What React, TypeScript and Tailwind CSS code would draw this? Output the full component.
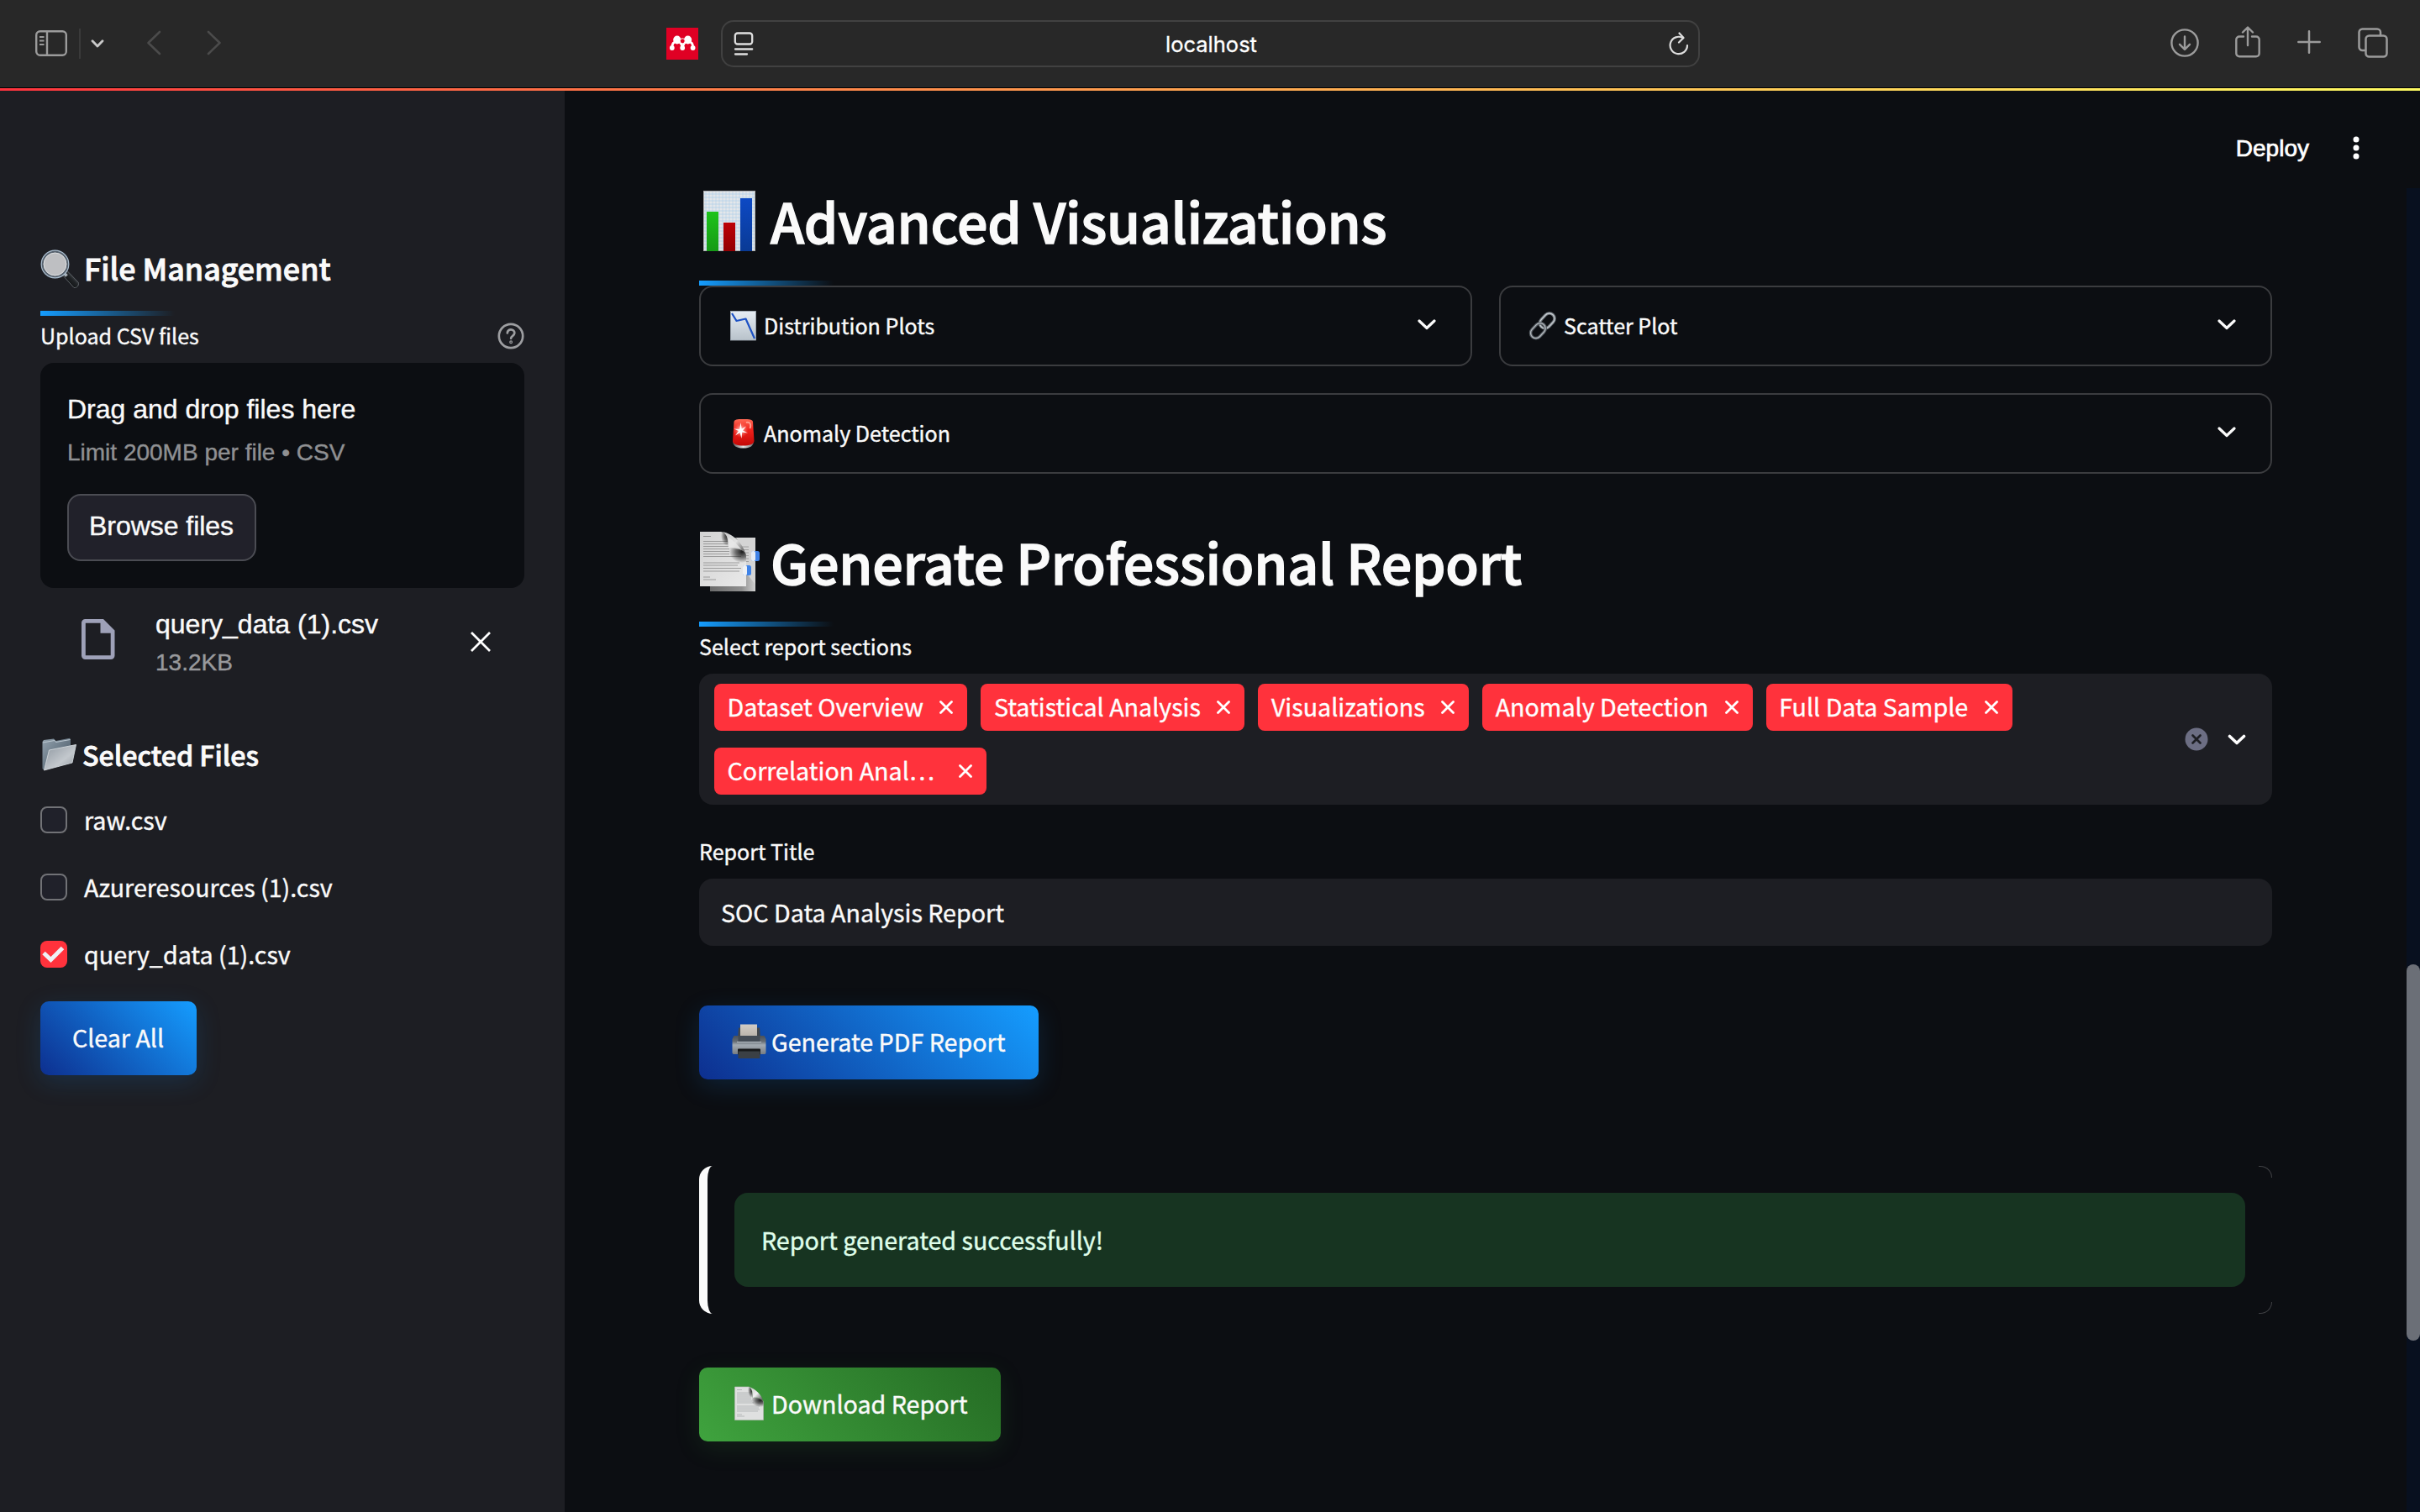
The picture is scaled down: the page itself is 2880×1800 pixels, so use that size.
import type { ReactNode } from 'react';

/* ---------- emoji-style pictures ---------- */

function BarChartEmoji() {
  const lines = Array.from({ length: 17 }, (_, i) => 4 + i * 4);
  return (
    <svg viewBox="0 0 72 72" className="mt-px h-[72px] w-[72px] shrink-0">
      <defs>
        <linearGradient id="bc-g" x1="0" y1="0" x2="0" y2="1"><stop offset="0" stopColor="#1dc31b" /><stop offset="1" stopColor="#169a17" /></linearGradient>
        <linearGradient id="bc-r" x1="0" y1="0" x2="0" y2="1"><stop offset="0" stopColor="#bd0106" /><stop offset="1" stopColor="#920004" /></linearGradient>
        <linearGradient id="bc-b" x1="0" y1="0" x2="0" y2="1"><stop offset="0" stopColor="#0d49c4" /><stop offset="1" stopColor="#093a95" /></linearGradient>
      </defs>
      <rect x="5.5" y=".5" width="61" height="71" fill="#e4e7ea" stroke="#a9acae" />
      {lines.map((y) => <path key={y} d={`M6 ${y}H66`} stroke="#a9cdea" strokeWidth=".9" opacity=".75" />)}
      {lines.slice(0, 15).map((x) => <path key={x} d={`M${x + 4} 1V71`} stroke="#a9cdea" strokeWidth=".8" opacity=".65" />)}
      <rect x="9" y="25" width="14" height="47" fill="url(#bc-g)" />
      <rect x="29" y="38" width="14" height="34" fill="url(#bc-r)" />
      <rect x="49" y="9" width="14" height="63" fill="url(#bc-b)" />
    </svg>
  );
}

function BookmarkTabsEmoji() {
  const rows = [12.5, 15.5, 18.5, 21.5, 24.5, 27.5, 30.5, 38, 41, 44.5, 48];
  return (
    <svg viewBox="0 0 72 72" className="h-[72px] w-[72px] shrink-0">
      <defs>
        <linearGradient id="bt-p" x1="0" y1="0" x2="1" y2="1"><stop offset="0" stopColor="#d2d2d2" /><stop offset="1" stopColor="#e9e9e9" /></linearGradient>
        <linearGradient id="bt-c" x1="0" y1="0" x2="1" y2="1"><stop offset="0" stopColor="#c4c4c4" /><stop offset=".5" stopColor="#e2e2e2" /><stop offset=".75" stopColor="#8a8a8a" /><stop offset="1" stopColor="#3c3c3c" /></linearGradient>
        <radialGradient id="bt-s"><stop offset="0" stopColor="#111" stopOpacity=".95" /><stop offset=".5" stopColor="#222" stopOpacity=".6" /><stop offset="1" stopColor="#222" stopOpacity="0" /></radialGradient>
        <linearGradient id="bt-b" x1="0" y1="0" x2="1" y2="0"><stop offset="0" stopColor="#6b6b6b" /><stop offset=".7" stopColor="#8f8f8f" /><stop offset="1" stopColor="#cfcfcf" /></linearGradient>
        <clipPath id="bt-clip"><path d="M1 1H26C33 2 35 9 36 21C46 21 56 22 56 30V66H1Z" /></clipPath>
      </defs>
      <rect x="13" y="8" width="54" height="64" fill="url(#bt-b)" />
      <path d="M44 8H67V64L56 50V30Z" fill="#d4d4d4" />
      {[19, 22.5, 26, 29.5, 33, 36.5].map((y) => <path key={y} d={`M49 ${y}H59`} stroke="#9a9a9a" strokeWidth=".9" />)}
      <path d="M1 1H26C33 2 35 9 36 21C46 21 56 22 56 30V66H1Z" fill="url(#bt-p)" />
      <path d="M5 6.5H14" stroke="#8f8f8f" strokeWidth="1" />
      {rows.map((y, i) => <path key={y} d={`M5 ${y}H${i < 2 ? 34 : i < 6 ? 36 : 50 - (i % 3) * 2}`} stroke="#9b9b9b" strokeWidth="1" />)}
      <path d="M5 55H13M5 58H20" stroke="#9b9b9b" strokeWidth="1" />
      <g clipPath="url(#bt-clip)">
        <ellipse cx="34" cy="6" rx="8" ry="12" fill="url(#bt-s)" />
        <ellipse cx="51" cy="25" rx="15" ry="13" fill="url(#bt-s)" />
      </g>
      <path d="M27 1C35 4 34 12 35 21C45 20 56 22 56 30C54 18 42 3 27 1Z" fill="url(#bt-c)" />
      <path d="M35 8V20.500C40 20 46 20.500 50 22C47 17 40 11 35 8Z" fill="#e9e9e9" opacity=".8" />
      <rect x="62" y="24" width="10" height="12" rx="2.5" fill="#3f83e8" /><rect x="62" y="24" width="5" height="12" rx="2" fill="#e6edf5" />
      <rect x="52" y="41" width="10" height="12" rx="2.5" fill="#3f83e8" /><rect x="52" y="41" width="5" height="12" rx="2" fill="#eef1f5" />
    </svg>
  );
}

function MagnifierEmoji() {
  return (
    <svg viewBox="0 0 46 46" className="mt-1 h-[46px] w-[46px] shrink-0">
      <defs><linearGradient id="mg-h" x1="1" y1="0" x2="0" y2="1"><stop offset="0" stopColor="#8b9299" /><stop offset=".45" stopColor="#202326" /><stop offset="1" stopColor="#000" /></linearGradient></defs>
      <path d="M26 30L32 25.500L45.500 39.500C46 43 43.500 46 40 45.500Z" fill="url(#mg-h)" stroke="#5d6267" strokeWidth="1" />
      <path d="M27 27L31.500 31.500" stroke="#aab3bb" strokeWidth="3.800" />
      <circle cx="17.500" cy="17.500" r="15.200" fill="#bebfc2" stroke="#56616d" strokeWidth="3" />
      <circle cx="17.500" cy="17.500" r="16.300" fill="none" stroke="#a9bccd" strokeWidth="1.200" />
      <circle cx="17.500" cy="17.500" r="13.400" fill="none" stroke="#dcdee0" strokeWidth="1" />
    </svg>
  );
}

function FolderEmoji() {
  return (
    <svg viewBox="0 0 44 40" className="h-[40px] w-[44px] shrink-0">
      <defs>
        <linearGradient id="fo-b" x1="0" y1="0" x2="1" y2="1"><stop offset="0" stopColor="#93a2ae" /><stop offset="1" stopColor="#3f4f5d" /></linearGradient>
        <linearGradient id="fo-f" x1="0" y1="0" x2="1" y2="1"><stop offset="0" stopColor="#8d969f" /><stop offset=".6" stopColor="#c3c8cd" /><stop offset="1" stopColor="#8f979f" /></linearGradient>
      </defs>
      <path d="M2.500 5L4 3L16 1.500L18.500 4L35 .800L36 2.500V30L4 38.500L2.500 37Z" fill="url(#fo-b)" />
      <path d="M3 6L17 3.500L18.500 5.500L35.500 2.500" fill="none" stroke="#bcc8d1" strokeWidth="1" />
      <path d="M10.500 15L42.500 8.500L38 30L4.500 39Z" fill="url(#fo-f)" stroke="#d3d8dc" strokeWidth=".9" strokeLinejoin="round" />
    </svg>
  );
}

function ChartDownEmoji() {
  return (
    <svg viewBox="0 0 36 36" className="h-9 w-9 shrink-0">
      <defs><linearGradient id="cd" x1="0" y1="0" x2="0" y2="1"><stop offset="0" stopColor="#e6edf4" /><stop offset="1" stopColor="#b8c2ca" /></linearGradient></defs>
      <rect x="3.500" y=".5" width="30" height="34.500" fill="url(#cd)" stroke="#a5afb8" strokeWidth=".8" />
      <path d="M5 3L10.500 12L21.500 9.500L32 33" fill="none" stroke="#1c51c4" strokeWidth="2.200" strokeLinejoin="round" />
    </svg>
  );
}

function LinkEmoji() {
  return (
    <svg viewBox="0 0 36 36" className="h-9 w-9 shrink-0">
      <g fill="none" transform="rotate(-47 18 18)">
        <rect x="16" y="11.500" width="20" height="12.500" rx="6.250" stroke="#70767c" strokeWidth="3.600" />
        <rect x="16" y="11.500" width="20" height="12.500" rx="6.250" stroke="#c6ccd1" strokeWidth="1.300" />
        <rect x="0" y="11.500" width="20" height="12.500" rx="6.250" stroke="#565c62" strokeWidth="3.600" />
        <rect x="0" y="11.500" width="20" height="12.500" rx="6.250" stroke="#b3b9be" strokeWidth="1.300" />
      </g>
    </svg>
  );
}

function SirenEmoji() {
  return (
    <svg viewBox="0 0 36 36" className="h-9 w-9 shrink-0">
      <defs>
        <linearGradient id="si-b" x1="0" y1="0" x2="1" y2="0"><stop offset="0" stopColor="#55585b" /><stop offset=".5" stopColor="#e4e4e4" /><stop offset="1" stopColor="#6c6e70" /></linearGradient>
        <linearGradient id="si-r" x1="0" y1="0" x2="0" y2="1"><stop offset="0" stopColor="#ff6a55" /><stop offset=".4" stopColor="#f0221c" /><stop offset="1" stopColor="#c40806" /></linearGradient>
        <radialGradient id="si-g"><stop offset="0" stopColor="#fff" /><stop offset="1" stopColor="#ff5a48" stopOpacity="0" /></radialGradient>
      </defs>
      <path d="M6 26C6 33 10 35.500 18.500 35.500S31 33 31 26Z" fill="url(#si-b)" />
      <path d="M7.500 4C8 1.500 11 1 18.500 1S29.500 1.500 30 4L31.500 27C31 31 26 32.500 18.500 32.500S6.500 31 6 27Z" fill="url(#si-r)" />
      <circle cx="15.500" cy="14" r="9" fill="url(#si-g)" />
      <path d="M15.500 5L16.700 12.500L22 9.500L18 14.500L24 17.500L17.200 16.500L16.500 24L14.500 17L9 20.500L13 15L7.500 12.500L14.200 13Z" fill="#fff" />
      <path d="M22 5C27 3.500 28 8 26.500 12" stroke="#ff9c8d" strokeWidth="2" fill="none" />
    </svg>
  );
}

function PrinterEmoji() {
  return (
    <svg viewBox="0 0 42 42" className="-mt-0.5 h-[42px] w-[42px] shrink-0">
      <defs>
        <linearGradient id="pr" x1="0" y1="0" x2="0" y2="1"><stop offset="0" stopColor="#4b5157" /><stop offset=".3" stopColor="#646b72" /><stop offset=".5" stopColor="#a3abb2" /><stop offset="1" stopColor="#777d83" /></linearGradient>
        <linearGradient id="pr-p" x1="0" y1="0" x2="0" y2="1"><stop offset="0" stopColor="#d3cdc5" /><stop offset="1" stopColor="#b9b3ab" /></linearGradient>
      </defs>
      <path d="M8 4.500H33L34 16H7Z" fill="#42474c" />
      <rect x="10" y=".5" width="20" height="14.500" fill="url(#pr-p)" />
      <path d="M2.500 14H38.500L40.500 18V34C40.500 35.500 39.500 36 38.500 36H2.500C1.500 36 .5 35.500 .5 34V18Z" fill="url(#pr)" />
      <path d="M7.500 14H33.500V21H7.500Z" fill="#444c55" />
      <path d="M6 21.500H35" stroke="#b8c0c7" strokeWidth="1" />
      <rect x="7" y="29.500" width="27" height="7" rx="1" fill="#17191b" />
      <path d="M7.500 32.500H33.500V41H7.500Z" fill="#3b4045" />
    </svg>
  );
}

function PageCurlEmoji() {
  return (
    <svg viewBox="0 0 42 42" className="-mt-0.5 h-[42px] w-[42px] shrink-0">
      <defs>
        <linearGradient id="pc-c" x1="0" y1="0" x2="1" y2="1"><stop offset="0" stopColor="#c4c4c4" /><stop offset=".5" stopColor="#f0f0f0" /><stop offset=".8" stopColor="#7a7a7a" /><stop offset="1" stopColor="#3c3c3c" /></linearGradient>
        <radialGradient id="pc-s"><stop offset="0" stopColor="#111" stopOpacity=".95" /><stop offset=".5" stopColor="#222" stopOpacity=".6" /><stop offset="1" stopColor="#222" stopOpacity="0" /></radialGradient>
        <clipPath id="pc-clip"><path d="M3.500 1H20C24 2 24.500 8 25 14C31 14 37.500 15 37.500 20V40.500H3.500Z" /></clipPath>
      </defs>
      <path d="M3.500 1H20C24 2 24.500 8 25 14C31 14 37.500 15 37.500 20V40.500H3.500Z" fill="#dfe0e0" stroke="#b5b5b5" strokeWidth=".6" />
      <path d="M6 4.500H12M6 8H22M6 10H23M6 12H23M6 14H23M6 16H23M6 18H24M6 20H26M6 24H33M6 26H32M6 28H33M6 30H31M6 34H12M6 36H15" stroke="#b2b4b6" strokeWidth=".9" />
      <g clipPath="url(#pc-clip)">
        <ellipse cx="24" cy="5" rx="5" ry="9" fill="url(#pc-s)" />
        <ellipse cx="34" cy="17" rx="11" ry="8" fill="url(#pc-s)" />
      </g>
      <path d="M20 1C25 3 24.500 8 25 14C31 13 37 15 37.500 19C36 11 28 3 20 1Z" fill="url(#pc-c)" />
    </svg>
  );
}

/* ---------- small shared pieces ---------- */

function Chevron({ className = '' }: { className?: string }) {
  return (
    <svg viewBox="0 0 22 13" className={`h-[13px] w-[22px] shrink-0 ${className}`} fill="none" stroke="currentColor" strokeWidth="3.200" strokeLinecap="round" strokeLinejoin="round">
      <path d="M2 2L11 10.500L20 2" />
    </svg>
  );
}

function Underline() {
  return <div className="h-[6px] w-40 bg-linear-to-r from-[#159dff] to-transparent" />;
}

function Heading({ icon, children }: { icon: ReactNode; children: ReactNode }) {
  return (
    <h2 className="flex h-[76px] items-center gap-[13px] text-[64.5px] leading-[76px] font-medium tracking-[-0.25px] [-webkit-text-stroke:1.4px_#fafafa]">
      {icon}
      <span className="whitespace-nowrap">{children}</span>
    </h2>
  );
}

function Expander({ icon, label }: { icon: ReactNode; label: string }) {
  return (
    <div className="flex h-24 flex-1 items-center rounded-2xl border-2 border-[#3b3c3f] pr-[41px] pl-8">
      {icon}
      <span className="ml-[7px] text-[25.07px]">{label}</span>
      <Chevron className="mb-1 ml-auto" />
    </div>
  );
}

function Tag({ label, truncated }: { label: string; truncated?: boolean }) {
  return (
    <div className="flex h-14 items-center rounded-lg bg-[#ff323c] pr-[17px] pl-[15.500px] text-white">
      <span className={`relative -top-px text-[28.65px] whitespace-nowrap ${truncated ? 'w-[256px]' : ''}`}>{label}</span>
      <svg viewBox="0 0 16 16" className="ml-[19.500px] h-4 w-4" stroke="currentColor" strokeWidth="2.800" strokeLinecap="round">
        <path d="M1.500 1.500L14.500 14.500M14.500 1.500L1.500 14.500" />
      </svg>
    </div>
  );
}

function FileOption({ label, checked }: { label: string; checked?: boolean }) {
  return (
    <label className="flex h-8 items-center gap-5">
      {checked ? (
        <span className="h-8 w-8 rounded-lg bg-[#ff323c]">
          <svg viewBox="0 0 32 32" className="h-8 w-8" fill="none" stroke="#eef0f5" strokeWidth="5"><path d="M4 14.500L12.500 22.500L26.500 8.500" /></svg>
        </span>
      ) : (
        <span className="h-8 w-8 rounded-lg border-2 border-[#717276] bg-[#20212a]" />
      )}
      <span className="text-[28.65px] leading-8">{label}</span>
    </label>
  );
}

/* ---------- browser toolbar ---------- */

function Toolbar() {
  return (
    <header className="flex h-[104px] items-center bg-[#282828]">
      <div className="flex w-[793px] items-center pl-[42px] text-[#9b9b9b]">
        <svg viewBox="0 0 38 31" className="-mt-0.5 h-[31px] w-[38px]" fill="none" stroke="currentColor" strokeWidth="2.400">
          <rect x="1.200" y="1.200" width="35.600" height="28.600" rx="4.500" />
          <path d="M14 1V30" />
          <path d="M5 8H10.500M5 12.500H10.500M5 17H10.500" strokeWidth="2" />
        </svg>
        <div className="ml-[14px] h-9 w-0.5 bg-[#3a3a3a]" />
        <svg viewBox="0 0 16 10" className="ml-3 h-[10px] w-4" fill="none" stroke="#c9c9c9" strokeWidth="2.800" strokeLinecap="round" strokeLinejoin="round"><path d="M2 1.800L8 8L14 1.800" /></svg>
        <svg viewBox="0 0 18 30" className="-mt-0.5 ml-[50px] h-[30px] w-[18px]" fill="none" stroke="#4b4b4b" strokeWidth="2.600" strokeLinecap="round" strokeLinejoin="round"><path d="M16 2L2.500 15L16 28" /></svg>
        <svg viewBox="0 0 18 30" className="-mt-0.5 ml-[54px] h-[30px] w-[18px]" fill="none" stroke="#4b4b4b" strokeWidth="2.600" strokeLinecap="round" strokeLinejoin="round"><path d="M2 2L15.500 15L2 28" /></svg>
      </div>
      <svg viewBox="0 0 38 38" className="h-[38px] w-[38px]">
        <rect width="38" height="38" fill="#e00024" />
        <path d="M7 24C6.500 18.500 8.500 17.500 12.500 16C17 17 18.500 19 19.200 24C20 19 21.500 17 26 16C30 17.500 32 18.500 31.500 24" fill="none" stroke="#fff" strokeWidth="2.800" />
        <g fill="#fff">
          <ellipse cx="12.800" cy="14.500" rx="4.600" ry="5" /><ellipse cx="25.600" cy="14.500" rx="4.600" ry="5" />
          <circle cx="6.800" cy="24" r="2.900" /><circle cx="19.200" cy="24" r="2.900" /><circle cx="31.600" cy="24" r="2.900" />
        </g>
        <circle cx="19.200" cy="15.800" r="3" fill="#e00024" stroke="#fff" strokeWidth="1" />
      </svg>
      <div className="ml-[27px] flex h-14 w-[1165px] items-center justify-between rounded-[15px] border-2 border-[#414141] pr-[11px] pl-[13px]">
        <svg viewBox="0 0 24 28" className="h-7 w-6" fill="none" stroke="#dedede" strokeWidth="2.300" strokeLinecap="round">
          <rect x="1.800" y="1.500" width="20.400" height="13" rx="3" /><path d="M2 20.500H22.200M2 26.500H16" />
        </svg>
        <span className="relative top-px font-[Inter] text-[25.5px] leading-8 text-white [-webkit-text-stroke:0.3px_white]">localhost</span>
        <svg viewBox="0 0 24 28" className="h-7 w-6" fill="none" stroke="#dedede" strokeWidth="2.200" strokeLinecap="round" strokeLinejoin="round">
          <path d="M17 7.200A10.200 10.200 0 1 0 22 16" /><path d="M12.500 1.500L17.500 7L12 12.500" />
        </svg>
      </div>
      <div className="ml-auto flex items-center pr-[38px] text-[#9b9b9b]">
        <svg viewBox="0 0 34 34" className="-mt-0.5 h-[34px] w-[34px]" fill="none" stroke="currentColor" strokeWidth="2.400" strokeLinecap="round" strokeLinejoin="round">
          <circle cx="17" cy="17" r="15.600" /><path d="M17 9.500V24.500M11 18.800L17 24.800L23 18.800" />
        </svg>
        <svg viewBox="0 0 30 38" className="mb-1 ml-[43px] h-[38px] w-[30px]" fill="none" stroke="currentColor" strokeWidth="2.400" strokeLinecap="round" strokeLinejoin="round">
          <path d="M10 12.500H5A3.700 3.700 0 0 0 1.300 16.200V32.500A3.700 3.700 0 0 0 5 36.200H25A3.700 3.700 0 0 0 28.700 32.500V16.200A3.700 3.700 0 0 0 25 12.500H20M15 23V2M9 7.500L15 1.500L21 7.500" />
        </svg>
        <svg viewBox="0 0 28 28" className="mb-1 ml-[44px] h-7 w-7" stroke="currentColor" strokeWidth="2.500" strokeLinecap="round"><path d="M14 1.300V26.700M1.300 14H26.700" /></svg>
        <svg viewBox="0 0 36 36" className="mb-0.5 ml-[44px] h-9 w-9" fill="none" stroke="currentColor" strokeWidth="2.500" strokeLinecap="round">
          <rect x="9.500" y="9.500" width="25" height="25" rx="4" /><path d="M9 27H5.500A4 4 0 0 1 1.500 23V5.500A4 4 0 0 1 5.500 1.500H23A4 4 0 0 1 27 5.500V9" />
        </svg>
      </div>
    </header>
  );
}

/* ---------- sidebar ---------- */

function Sidebar() {
  return (
    <aside className="flex w-[672px] shrink-0 flex-col items-start bg-[#1d1e23] px-12 pt-[180px]">
      <h3 className="flex h-[60px] items-center gap-1.5 text-[35.8px] leading-[60px] font-medium [-webkit-text-stroke:0.9px_#fafafa]">
        <MagnifierEmoji />
        <span>File Management</span>
      </h3>
      <div className="mt-[22px]"><Underline /></div>
      <div className="mt-[9px] flex h-[30px] w-[576px] items-center justify-between">
        <span className="text-[25.07px]">Upload CSV files</span>
        <svg viewBox="0 0 32 32" className="h-8 w-8" fill="none" stroke="#9d9ea1" strokeWidth="2.700" strokeLinecap="round">
          <circle cx="16" cy="16" r="14.200" />
          <path d="M11.800 12.500C11.800 6.800 20.500 7.200 20.300 12.500C20.200 15.800 16.200 15.800 16.100 18.800" />
          <circle cx="16.100" cy="23.300" r=".6" />
        </svg>
      </div>
      <div className="mt-[17px] flex h-[268px] w-[576px] flex-col items-start rounded-2xl bg-[#0c0e12] px-8 pt-[35px] font-['Liberation_Sans']">
        <span className="text-[32px] leading-10">Drag and drop files here</span>
        <span className="mt-3 text-[28px] leading-10 text-[#8f9092] [-webkit-text-stroke:0.4px_#8f9092]">Limit 200MB per file • CSV</span>
        <button className="mt-[29px] h-20 w-[225px] rounded-2xl border-2 border-[#4b4c53] bg-[#21212a] pr-px pb-1 text-[32px] tracking-[-0.05px]">Browse files</button>
      </div>
      <div className="mt-[22px] flex w-[576px] items-center pr-10 pl-[49px] font-['Liberation_Sans']">
        <svg viewBox="0 0 40 48" className="-mt-2 h-12 w-10" fill="#9ea1b8">
          <path fillRule="evenodd" d="M4.500 0H26L39.500 13.500V43.500A4.500 4.500 0 0 1 35 48H4.500A4.500 4.500 0 0 1 0 43.500V4.500A4.500 4.500 0 0 1 4.500 0ZM4.800 4.800V43.200H34.700V16.800H22.500V4.800Z" />
        </svg>
        <div className="relative top-px ml-[48px] flex flex-col gap-1.5">
          <span className="text-[32px] leading-10">query_data (1).csv</span>
          <span className="text-[28px] leading-10 text-[#98999c] [-webkit-text-stroke:0.4px_#98999c]">13.2KB</span>
        </div>
        <svg viewBox="0 0 24 24" className="-mt-[3px] ml-auto h-6 w-6" stroke="#fff" strokeWidth="2.800"><path d="M1 1L23 23M23 1L1 23" /></svg>
      </div>
      <h4 className="mt-[66px] flex h-12 items-center gap-1.5 text-[32.200px] leading-[48px] font-medium tracking-[-0.05px] [-webkit-text-stroke:0.8px_#fafafa]">
        <FolderEmoji />
        <span>Selected Files</span>
      </h4>
      <div className="mt-[38px] flex flex-col gap-12">
        <FileOption label="raw.csv" />
        <FileOption label="Azureresources (1).csv" />
        <FileOption label="query_data (1).csv" checked />
      </div>
      <button className="mt-10 h-[88px] w-[186px] rounded-[10px] bg-[linear-gradient(45deg,#0d2f8f,#159dff)] pr-px pb-0.5 text-[28.65px] shadow-[0_8px_30px_rgba(21,130,220,0.18)]">Clear All</button>
    </aside>
  );
}

/* ---------- main area ---------- */

function Main() {
  return (
    <main className="relative flex flex-1 flex-col items-start bg-[#0c0e12] pr-[176px] pl-40">
      <div className="flex h-[116px] w-full items-start justify-end pt-[53px]">
        <span className="-mr-11 font-['Liberation_Sans'] text-[28px] leading-8 text-white [-webkit-text-stroke:0.7px_white]">Deploy</span>
        <svg viewBox="0 0 8 30" className="-mr-[104px] ml-[96px] h-[30px] w-2" fill="#fff"><circle cx="4" cy="5" r="3.500" /><circle cx="4" cy="15" r="3.500" /><circle cx="4" cy="25" r="3.500" /></svg>
      </div>

      <Heading icon={<BarChartEmoji />}>Advanced Visualizations</Heading>
      <div className="mt-[34px]"><Underline /></div>
      <div className="flex w-full gap-8">
        <Expander icon={<ChartDownEmoji />} label="Distribution Plots" />
        <Expander icon={<LinkEmoji />} label="Scatter Plot" />
      </div>
      <div className="mt-8 flex w-full">
        <Expander icon={<SirenEmoji />} label="Anomaly Detection" />
      </div>

      <div className="mt-[66px]"><Heading icon={<BookmarkTabsEmoji />}>Generate Professional Report</Heading></div>
      <div className="mt-[34px]"><Underline /></div>
      <span className="mt-[7px] text-[25.07px] leading-8">Select report sections</span>
      <div className="mt-[17px] flex h-[156px] w-full items-center rounded-2xl bg-[#1d1e23] pr-[31px] pl-[18px]">
        <div className="flex w-[1700px] flex-wrap gap-x-4 gap-y-5">
          <Tag label="Dataset Overview" />
          <Tag label="Statistical Analysis" />
          <Tag label="Visualizations" />
          <Tag label="Anomaly Detection" />
          <Tag label="Full Data Sample" />
          <Tag label="Correlation Anal…" truncated />
        </div>
        <svg viewBox="0 0 28 28" className="ml-auto h-7 w-7">
          <circle cx="14" cy="14" r="13.500" fill="#6c6e83" />
          <path d="M9.500 9.500L18.500 18.500M18.500 9.500L9.500 18.500" stroke="#1d1e23" strokeWidth="2.700" strokeLinecap="round" />
        </svg>
        <svg viewBox="0 0 22 13" className="ml-[23px] h-[13px] w-[22px]" fill="none" stroke="#fff" strokeWidth="3.600" strokeLinecap="round" strokeLinejoin="round"><path d="M2.500 2.500L11 10.500L19.500 2.500" /></svg>
      </div>

      <span className="mt-[39px] text-[25.07px] leading-8">Report Title</span>
      <div className="mt-[17px] flex h-20 w-full items-center rounded-2xl bg-[#1d1e23] pl-[26px] text-[28.65px]">SOC Data Analysis Report</div>

      <button className="mt-[71px] flex h-[88px] w-[404px] items-center rounded-[10px] bg-[linear-gradient(45deg,#0d2f8f,#159dff)] pl-[39px] text-[28.65px] shadow-[0_8px_30px_rgba(21,130,220,0.18)]">
        <PrinterEmoji />
        <span className="relative -top-px ml-[5px]">Generate PDF Report</span>
      </button>

      <div className="relative mt-[103px] h-44 w-full rounded-[16px] border-l-[10px] border-[#fafafa] py-8 pr-8 pl-8">
        <div className="flex h-28 items-center rounded-2xl bg-[#173421] pl-8 text-[28.65px] text-[#dffde9] [-webkit-text-stroke:0.4px_#dffde9]">Report generated successfully!</div>
        <span className="absolute top-0 right-0 h-[14px] w-4 rounded-tr-[16px] border-t border-r border-[#404145]" />
        <span className="absolute right-0 bottom-0 h-[14px] w-4 rounded-br-[16px] border-r border-b border-[#404145]" />
      </div>

      <button className="mt-16 flex h-[88px] w-[359px] items-center rounded-[10px] bg-[linear-gradient(45deg,#3fa33e,#256b24)] pl-[39px] text-[28.65px] shadow-[0_8px_30px_rgba(62,163,62,0.13)]">
        <PageCurlEmoji />
        <span className="relative -top-px ml-[5px]">Download Report</span>
      </button>

      <div className="absolute top-[116px] right-0 bottom-0 w-4 bg-[#08101f]">
        <div className="mt-[924px] h-[448px] w-4 rounded-lg bg-[#6b6f77]" />
      </div>
    </main>
  );
}

export default function App() {
  return (
    <div className="flex h-[1800px] w-[2880px] flex-col overflow-hidden bg-[#0c0e12] font-['Noto_Sans_CJK_SC',sans-serif] text-[#fafafa] [-webkit-text-stroke:0.4px_#fafafa]">
      <Toolbar />
      <div className="h-px bg-black" />
      <div className="h-[3px] bg-linear-to-r from-[#ff323e] to-[#fffb62]" />
      <div className="flex min-h-0 flex-1">
        <Sidebar />
        <Main />
      </div>
    </div>
  );
}
